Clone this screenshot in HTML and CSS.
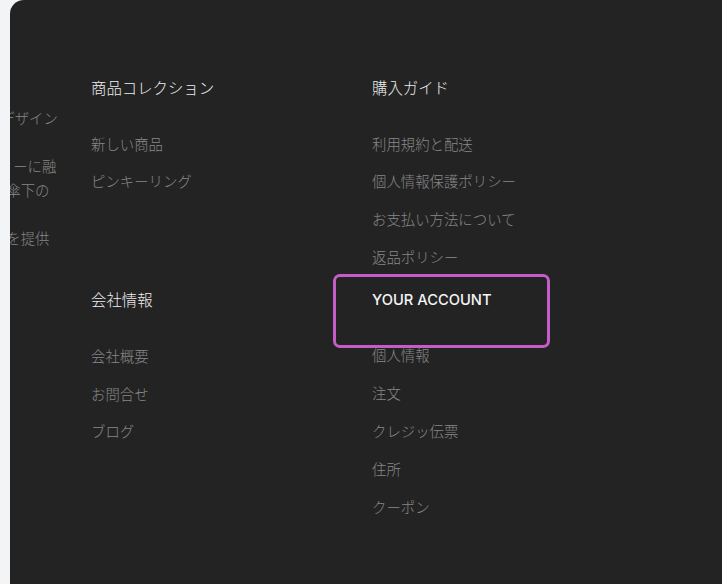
FILE: index.html
```html
<!DOCTYPE html>
<html lang="ja">
<head>
    <meta charset="UTF-8">
    <meta name="viewport" content="width=device-width, initial-scale=1.0">
    <title>Footer</title>
    <link rel="stylesheet" href="styles.css">
</head>
<body>
    <footer class="footer">
        <div class="footer-inner">
            <!-- Brand description (partly scrolled out of view) -->
            <div class="brand">
                <p class="brand-text">
                    <span>ルミエールは、繊細で上品なデザイン</span>
                    <span>のジュエリーを展開する</span>
                    <span>ブランドです。日常のスタイリーに融</span>
                    <span class="shift">け込む上質さを、ルミエール傘下の</span>
                    <span>工房からお客様へ直接</span>
                    <span class="shift">お届けし、適正な価格で品質を提供</span>
                </p>
            </div>

            <div class="links">
                <!-- Section: collections -->
                <div class="link-group">
                    <h3 class="link-title">商品コレクション</h3>
                    <ul class="link-list">
                        <li><a href="#">新しい商品</a></li>
                        <li><a href="#">ピンキーリング</a></li>
                    </ul>
                </div>

                <!-- Section: buying guide -->
                <div class="link-group">
                    <h3 class="link-title">購入ガイド</h3>
                    <ul class="link-list">
                        <li><a href="#">利用規約と配送</a></li>
                        <li><a href="#">個人情報保護ポリシー</a></li>
                        <li><a href="#">お支払い方法について</a></li>
                        <li><a href="#">返品ポリシー</a></li>
                    </ul>
                </div>

                <!-- Section: company -->
                <div class="link-group">
                    <h3 class="link-title">会社情報</h3>
                    <ul class="link-list">
                        <li><a href="#">会社概要</a></li>
                        <li><a href="#">お問合せ</a></li>
                        <li><a href="#">ブログ</a></li>
                    </ul>
                </div>

                <!-- Section: account -->
                <div class="link-group">
                    <h3 class="link-title link-title-latin focused">YOUR ACCOUNT</h3>
                    <ul class="link-list">
                        <li><a href="#">個人情報</a></li>
                        <li><a href="#">注文</a></li>
                        <li><a href="#">クレジッ伝票</a></li>
                        <li><a href="#">住所</a></li>
                        <li><a href="#">クーポン</a></li>
                    </ul>
                </div>
            </div>
        </div>
    </footer>
</body>
</html>
```

FILE: styles.css
```css
/* General Styles */
body {
    margin: 0;
    padding: 0;
    background-color: #f3f4f6;
    font-family: 'Noto Sans CJK JP', 'Noto Sans', sans-serif;
}

.footer {
    margin-left: 10px;
    min-height: 584px;
    background-color: #232323;
    border-top-left-radius: 14px;
    overflow: hidden;
}

.footer-inner {
    display: flex;
    padding-top: 75px;
}

/* Brand column */
.brand {
    flex: 0 0 244.8px;
    margin-left: -196.8px;
    margin-right: 33px;
}

.brand-text {
    margin: 31px 0 0;
    font-size: 14.4px;
    font-weight: 300;
    line-height: 24px;
    color: #878787;
}

.brand-text span {
    display: block;
    white-space: nowrap;
}

.brand-text .shift {
    padding-left: 6px;
}

/* Link columns */
.links {
    display: grid;
    grid-template-columns: 281px 1fr;
    row-gap: 18.5px;
}

.link-title {
    position: relative;
    margin: 0 0 32.5px;
    font-size: 15.4px;
    font-weight: 300;
    line-height: 24px;
    color: #ededed;
}

.link-title-latin {
    padding-top: 1px;
    margin-bottom: 31px;
    font-family: 'Inter', 'Noto Sans', sans-serif;
    font-weight: 500;
    font-size: 14.7px;
    color: #f4f4f4;
}

/* focus ring drawn over the heading */
.focused::after {
    content: '';
    position: absolute;
    left: -39px;
    top: -13.5px;
    width: 217px;
    height: 74.5px;
    box-sizing: border-box;
    border: 3px solid #c65cc9;
    border-radius: 7px;
}

.link-list {
    list-style: none;
    margin: 0;
    padding: 0;
    display: flex;
    flex-direction: column;
    gap: 13.8px;
}

.link-list li {
    line-height: 24px;
    font-size: 14.4px;
    font-weight: 300;
}

.link-list a {
    color: #878787;
    text-decoration: none;
}

.link-list a:hover {
    color: #cfcfcf;
}
```
